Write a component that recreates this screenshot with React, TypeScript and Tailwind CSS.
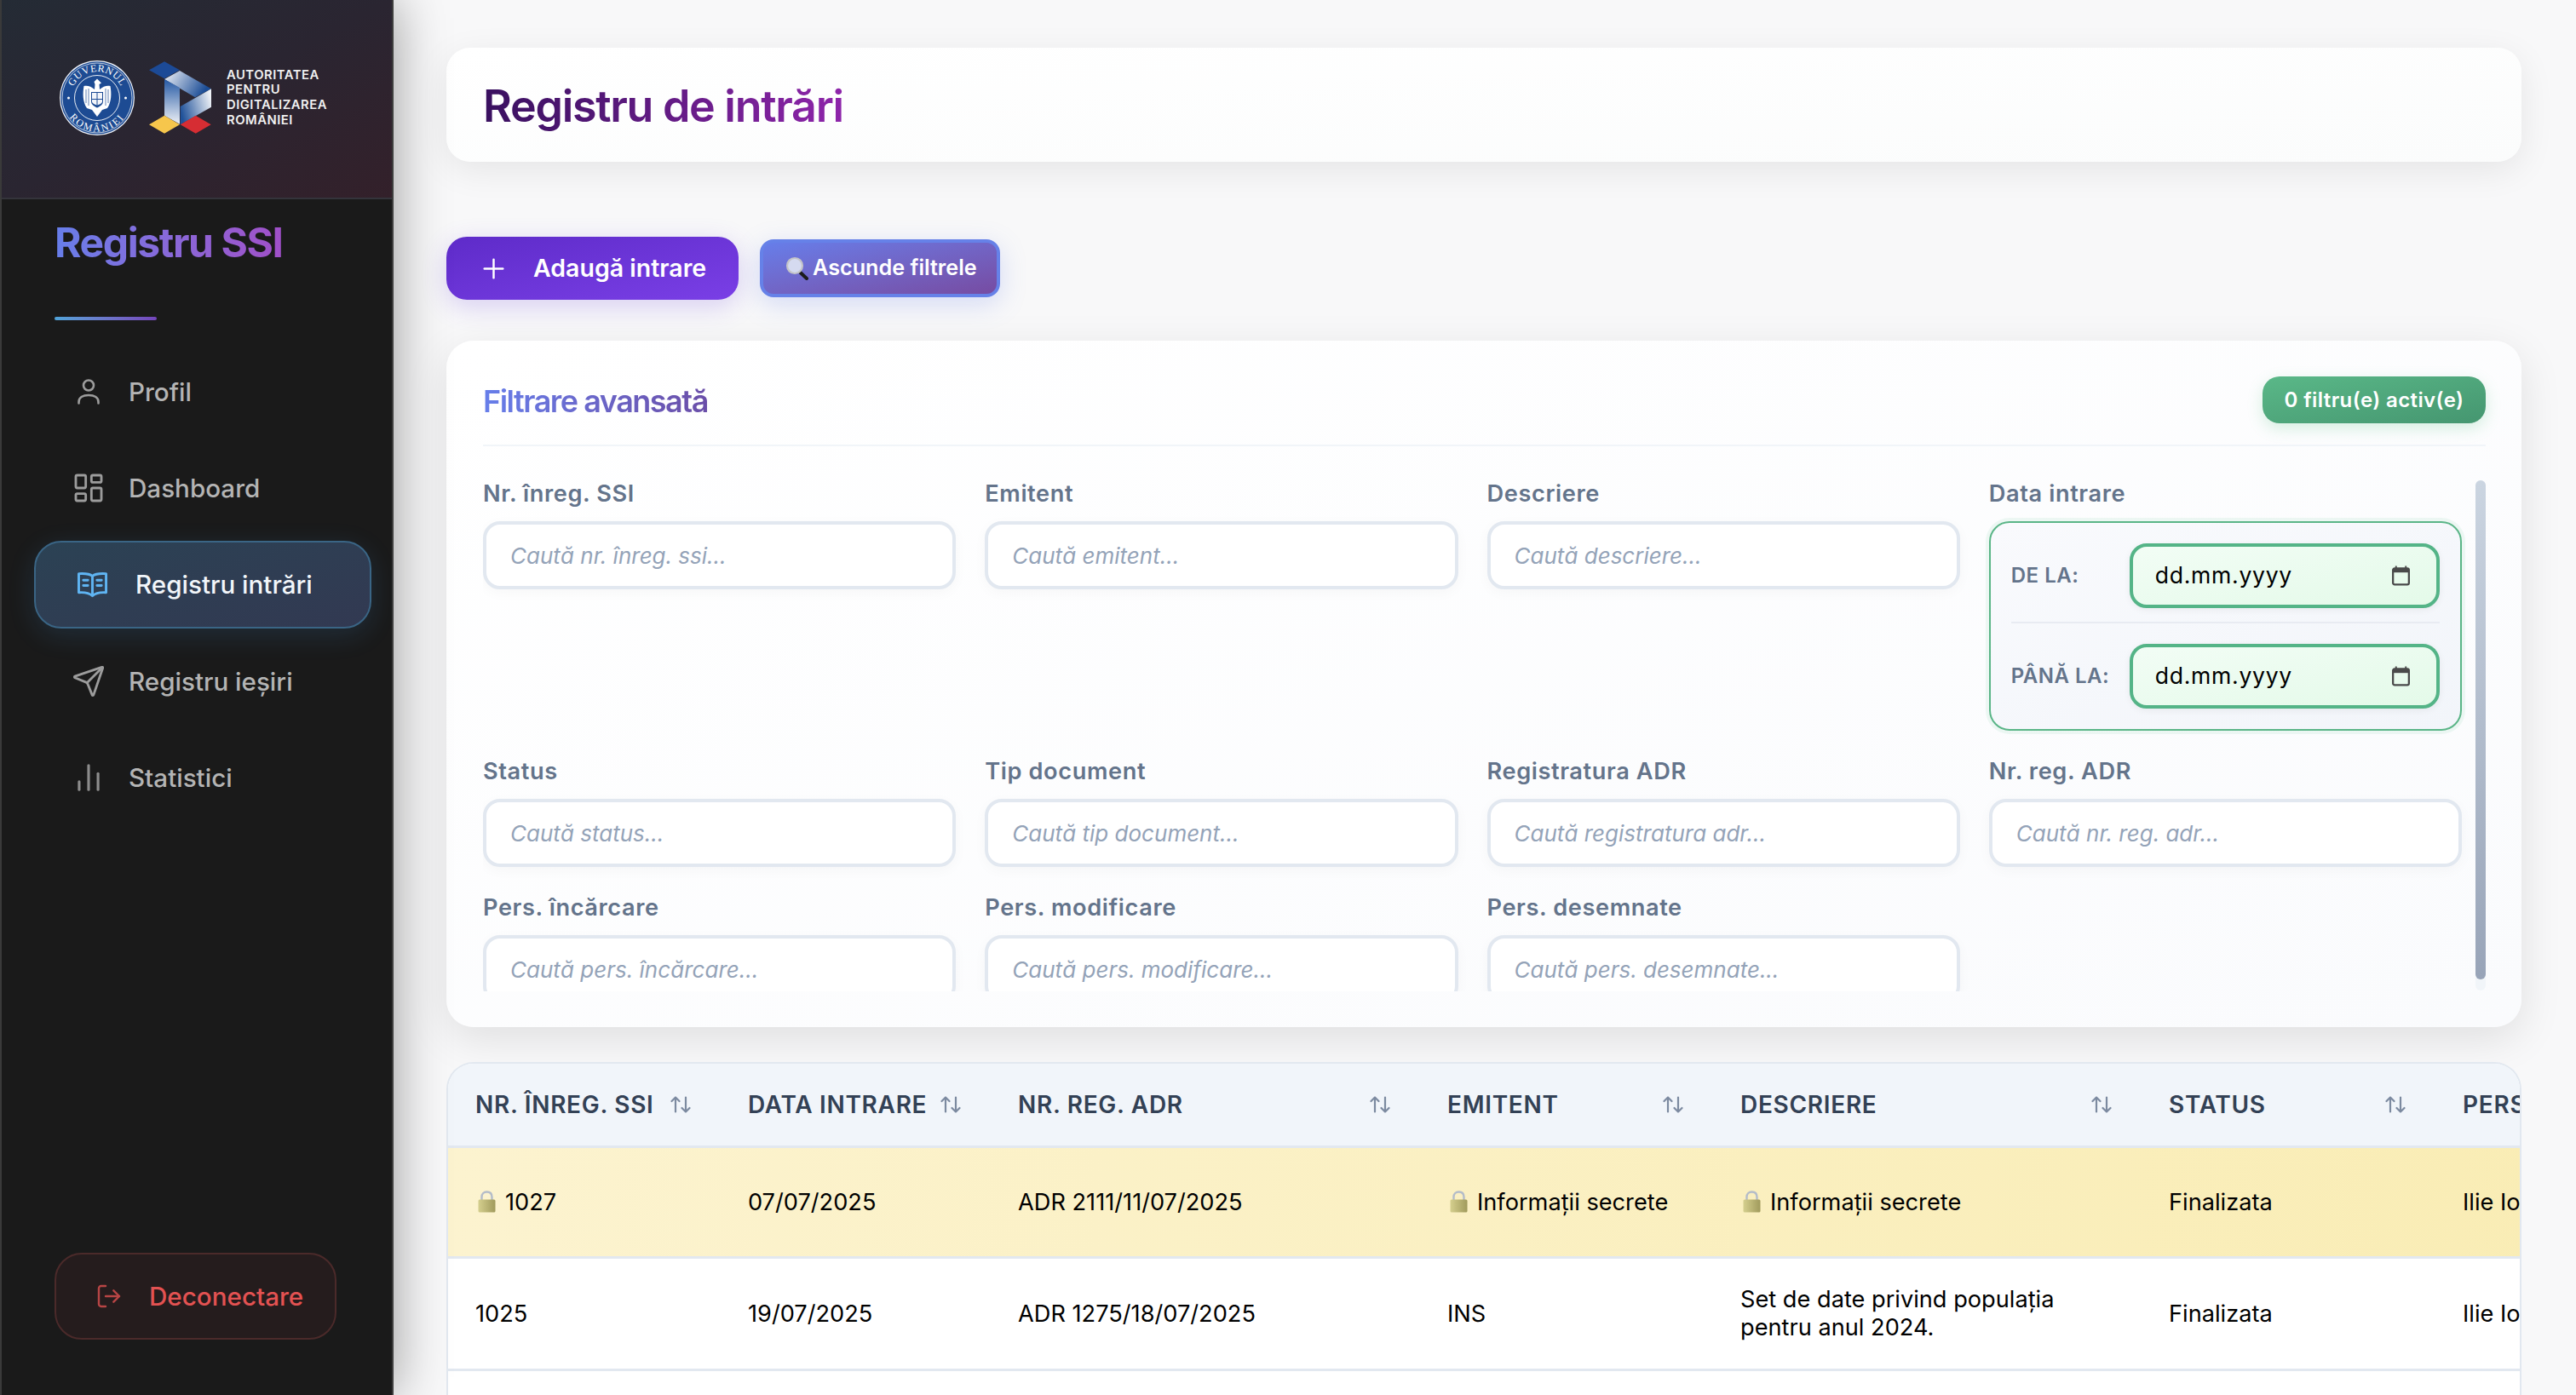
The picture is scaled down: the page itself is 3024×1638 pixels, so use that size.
import React from "react";
import { LayoutDashboard, Send, ChartNoAxesColumn, LogOut, Plus } from "lucide-react";

function Seal() {
  return (
    <svg width="88" height="88" viewBox="0 0 88 88" className="shrink-0">
      <defs>
        <path id="sealTop" d="M 13 44 A 31 31 0 0 1 75 44" />
        <path id="sealBottom" d="M 4.500 44 A 39.500 39.500 0 0 0 83.500 44" />
      </defs>
      <circle cx="44" cy="44" r="44" fill="#f2f5fa" />
      <circle cx="44" cy="44" r="42.800" fill="#1d4b93" />
      <circle cx="44" cy="44" r="41" fill="none" stroke="#ffffff" strokeWidth="0.700" />
      <circle cx="44" cy="44" r="26.500" fill="none" stroke="#ffffff" strokeWidth="0.900" />
      <text fill="#fff" fontSize="12" fontFamily="'Liberation Serif',serif" letterSpacing="0.500">
        <textPath href="#sealTop" startOffset="50%" textAnchor="middle">GUVERNUL</textPath>
      </text>
      <text fill="#fff" fontSize="12" fontFamily="'Liberation Serif',serif" letterSpacing="2">
        <textPath href="#sealBottom" startOffset="50%" textAnchor="middle">ROMÂNIEI</textPath>
      </text>
      <circle cx="10.500" cy="44" r="1.500" fill="#fff" />
      <circle cx="77.500" cy="44" r="1.500" fill="#fff" />
      <path fill="#fff" d="M41 34 C37 30 32 29 28.500 30 C27 38 27 49 32 56 L38 58 L44 66 L50 58 L56 56 C61 49 61 38 59.500 30 C56 29 51 30 47 34 L46.500 28 L49 26.500 L44 21.500 L40.500 25 L41.500 28 Z" />
      <path fill="#1d4b93" d="M37 37 h14 v11 c0 4 -4 6 -7 7.500 c-3 -1.500 -7 -3.500 -7 -7.500 Z" />
      <path fill="#f4f6fa" d="M38 38 h5.500 v7 h-5.500 Z M44.500 38 h5.500 v7 h-5.500 Z M38 46 h5.500 v6.500 l-3.500 -1.500 l-2 -2 Z M44.500 46 h5.500 v3 l-2 2 l-3.500 1.500 Z" />
      <path stroke="#1d4b93" strokeWidth="0.700" fill="none" d="M31 34 v16 M34 33 v20 M54 33 v20 M57 34 v16" />
    </svg>
  );
}

function AdrMark() {
  return (
    <svg width="74" height="86" viewBox="176 73 74 86" className="shrink-0">
      <defs>
        <linearGradient id="adrTop" x1="0" y1="0" x2="1" y2="0.350">
          <stop offset="0" stopColor="#f4f6fa" />
          <stop offset="1" stopColor="#1c4d96" />
        </linearGradient>
        <linearGradient id="adrVert" x1="0" y1="0" x2="0" y2="1">
          <stop offset="0" stopColor="#2458a4" />
          <stop offset="1" stopColor="#eef1f6" />
        </linearGradient>
        <linearGradient id="adrRight" x1="0" y1="0.600" x2="1" y2="0.300">
          <stop offset="0" stopColor="#1f5199" />
          <stop offset="1" stopColor="#eef1f6" />
        </linearGradient>
      </defs>
      <polygon fill="#1c4a96" points="176,83.300 194,73.300 212,83.300 194,93.300" />
      <polygon fill="url(#adrTop)" points="194,94 212,84 249,105.300 230,115.300" />
      <polygon fill="url(#adrVert)" points="194,94 212,104 212,146.700 194,136.700" />
      <polygon fill="url(#adrRight)" points="212.700,126 249,105.300 249,126.700 212.700,147.300" />
      <polygon fill="#f6c64c" points="176,147.300 194,136.700 212,147.300 194,157.700" />
      <polygon fill="#d62d33" points="212.700,147.300 230.700,136.700 248.700,147.300 230.700,157.700" />
    </svg>
  );
}

function Lock() {
  return (
    <svg width="21" height="26" viewBox="0 0 21 26" className="ml-[3px] shrink-0">
      <defs>
        <linearGradient id="lockBody" x1="0" y1="0" x2="1" y2="0">
          <stop offset="0" stopColor="#d5cf8e" />
          <stop offset="1" stopColor="#a09a5c" />
        </linearGradient>
      </defs>
      <path d="M4.500 12 V7.500 C4.500 3.500 7 1.500 10.500 1.500 C14 1.500 16.500 3.500 16.500 7.500 V12" fill="none" stroke="#b4bcc9" strokeWidth="2.400" />
      <rect x="0.500" y="10.500" width="20" height="15" rx="1.500" fill="url(#lockBody)" />
    </svg>
  );
}

function Magnifier() {
  return (
    <svg width="28" height="28" viewBox="0 0 28 28" className="shrink-0">
      <path d="M16.500 18 L25 26" stroke="#1c1c1c" strokeWidth="4" strokeLinecap="round" />
      <circle cx="11" cy="11" r="9" fill="#d5daf0" stroke="#c4c4c8" strokeWidth="2.200" />
    </svg>
  );
}

function Calendar() {
  return (
    <svg width="21" height="24" viewBox="0 0 22 24" className="shrink-0">
      <path d="M5 0 v3 M17 0 v3" stroke="#4a4a4a" strokeWidth="2" />
      <rect x="1.200" y="3" width="19.600" height="19.800" rx="2" fill="none" stroke="#4a4a4a" strokeWidth="2.400" />
      <rect x="1.200" y="3" width="19.600" height="5" fill="#4a4a4a" />
    </svg>
  );
}

function SortIcon() {
  return (
    <svg width="24" height="20" viewBox="0 0 24 20" fill="none" stroke="#7c8aa0" strokeWidth="2.200" strokeLinecap="round" strokeLinejoin="round" className="mr-[3px] shrink-0">
      <path d="M6 18.500 V1.500 M1.500 6 L6 1.500 L10.500 6" />
      <path d="M18 1.500 V18.500 M13.500 14 L18 18.500 L22.500 14" />
    </svg>
  );
}

function UserIcon() {
  return (
    <svg width="26" height="30" viewBox="0 0 26 30" fill="none" stroke="#9c9c9c" strokeWidth="2.600" strokeLinecap="round">
      <circle cx="13" cy="7.500" r="6" />
      <path d="M1.500 28.500 v-1.500 C1.500 22 6 19 13 19 C20 19 24.500 22 24.500 27 V28.500" />
    </svg>
  );
}

function BookIcon() {
  return (
    <svg width="35" height="32" viewBox="0 0 36 32" fill="none" stroke="#5fb4f2" strokeWidth="3" strokeLinecap="round" strokeLinejoin="round" className="shrink-0">
      <path d="M18 5 C15 2.500 8 1.800 1.500 2.200 V25 C8 24.500 14 25.500 18 29 C22 25.500 28 24.500 34.500 25 V2.200 C28 1.800 21 2.500 18 5 Z M18 5 V29" />
      <path d="M7 10 H12.500 M7 16.500 H12.500 M23.500 10 H29 M23.500 16.500 H29" />
    </svg>
  );
}

const filters = [
  ["Nr. înreg. SSI", "Caută nr. înreg. ssi..."],
  ["Emitent", "Caută emitent..."],
  ["Descriere", "Caută descriere..."],
  ["Data intrare", ""],
  ["Status", "Caută status..."],
  ["Tip document", "Caută tip document..."],
  ["Registratura ADR", "Caută registratura adr..."],
  ["Nr. reg. ADR", "Caută nr. reg. adr..."],
  ["Pers. încărcare", "Caută pers. încărcare..."],
  ["Pers. modificare", "Caută pers. modificare..."],
  ["Pers. desemnate", "Caută pers. desemnate..."],
];

function DateRow({ label }: { label: string }) {
  return (
    <div className="flex items-center">
      <span className="w-[139px] shrink-0 text-[24px] font-semibold tracking-[0.5px] text-[#64748b]">{label}</span>
      <div className="flex h-[76px] flex-1 items-center justify-between rounded-[20px] border-4 border-[#54b487] bg-gradient-to-br from-[#f2fdf5] to-[#e4fae9] pl-[26px] pr-[31px] text-[26.600px] tracking-[0.7px] text-black shadow-[0_2px_8px_rgba(0,0,0,0.06)]">
        <span>dd.mm.yyyy</span>
        <Calendar />
      </div>
    </div>
  );
}

function NavItem({ icon, label }: { icon: React.ReactNode; label: string }) {
  return (
    <div className="ml-[38px] flex h-[102px] items-center text-[29.600px] font-medium text-[#b4b4b4]">
      <div className="flex w-[111px] shrink-0 items-center justify-center pl-[16px]">{icon}</div>
      <span>{label}</span>
    </div>
  );
}

const cols = [
  ["NR. ÎNREG. SSI", 320],
  ["DATA INTRARE", 317],
  ["NR. REG. ADR", 504],
  ["EMITENT", 344],
  ["DESCRIERE", 503],
  ["STATUS", 345],
  ["PERS. ÎNCĂRCARE", 400],
] as const;

function Secret({ text }: { text: string }) {
  return (
    <span className="flex items-center gap-[11px]">
      <Lock />
      <span>{text}</span>
    </span>
  );
}

const cell = "px-[32px] align-middle text-[27.200px] leading-[33px] text-black whitespace-nowrap";

export default function App() {
  return (
    <div className="flex h-[1638px] w-[3024px] overflow-hidden bg-[#f8f8f9] font-[Inter,sans-serif]">
      <aside className="relative z-10 flex h-full w-[460px] shrink-0 flex-col border-l-2 border-[#3a3a3a] bg-[#1a1a1a] shadow-[2px_0_0_#3c3c3c,0_0_60px_rgba(0,0,0,0.42)]">
        <div className="flex h-[234px] shrink-0 items-center gap-[17px] border-b-2 border-[#34343b] bg-gradient-to-br from-[#242b35] via-[#2a2531] to-[#33202a] pb-[2px] pl-[68px]">
          <Seal />
          <div className="flex items-center gap-[17px]">
            <AdrMark />
            <div className="text-[14.800px] font-semibold leading-[17.700px] tracking-[0.5px] text-[#f1f1f1]">
              <div>AUTORITATEA</div>
              <div>PENTRU</div>
              <div>DIGITALIZAREA</div>
              <div>ROMÂNIEI</div>
            </div>
          </div>
        </div>
        <div className="pl-[62px] pt-[19px]">
          <div className="w-fit bg-gradient-to-r from-[#667eea] to-[#a04fc8] bg-clip-text text-[48px] font-bold leading-[64px] tracking-[-1.400px] text-transparent">
            Registru SSI
          </div>
          <div className="mt-[55px] h-[4px] w-[120px] rounded-full bg-gradient-to-r from-[#4fa3d8] to-[#7445bb]" />
        </div>
        <nav className="mt-[33px] flex flex-col gap-[11px] pr-[24px]">
          <NavItem icon={<UserIcon />} label="Profil" />
          <NavItem icon={<LayoutDashboard size={40} color="#9c9c9c" strokeWidth={1.700} />} label="Dashboard" />
          <div className="ml-[38px] flex h-[103px] items-center rounded-[32px] border-2 border-[#3a6585] bg-gradient-to-br from-[#2b4254] to-[#323952] text-[29.600px] font-medium text-[#f2f6fa] shadow-[0_8px_32px_rgba(79,172,254,0.14)]">
            <div className="flex w-[117px] shrink-0 items-center pl-[49px]"><BookIcon /></div>
            <span>Registru intrări</span>
          </div>
          <NavItem icon={<Send size={40} color="#9c9c9c" strokeWidth={1.700} />} label="Registru ieșiri" />
          <NavItem icon={<ChartNoAxesColumn size={38} color="#8c8c8c" strokeWidth={2} />} label="Statistici" />
        </nav>
        <div className="mt-auto mb-[65px] ml-[62px] flex h-[102px] w-[331px] items-center rounded-[32px] border-2 border-[#4b2a2a] bg-[#251c1d] pl-[46px] text-[29.600px] font-medium text-[#e35252]">
          <LogOut size={32} color="#b84545" strokeWidth={1.800} className="shrink-0" />
          <span className="ml-[31px]">Deconectare</span>
        </div>
      </aside>

      <main className="flex h-full min-w-0 flex-1 flex-col pl-[64px] pr-[64px] pt-[56px]">
        <header className="flex h-[134px] shrink-0 items-center rounded-[28px] bg-gradient-to-br from-white to-[#fbfcfc] pl-[43px] shadow-[0_10px_40px_rgba(0,0,0,0.08)]">
          <h1 className="mt-[3px] bg-gradient-to-r from-[#39105f] to-[#8e25aa] bg-clip-text text-[52px] font-semibold leading-[72px] tracking-[-1.300px] text-transparent">
            Registru de intrări
          </h1>
        </header>

        <div className="mt-[88px] flex shrink-0 items-center gap-[25px]">
          <button className="flex h-[74px] w-[343px] items-center rounded-[24px] bg-gradient-to-br from-[#5e2bc9] to-[#7a3fe6] pl-[37px] text-[28.500px] font-semibold text-white shadow-[0_8px_30px_rgba(102,60,220,0.22)]">
            <Plus size={37} strokeWidth={1.600} className="shrink-0" />
            <span className="ml-[28px]">Adaugă intrare</span>
          </button>
          <button className="flex h-[68px] w-[282px] items-center gap-[4px] rounded-[16px] border-4 border-[#6681e8] bg-gradient-to-br from-[#667eea] to-[#764ba2] pl-[26px] text-[25.200px] font-semibold text-white shadow-[0_8px_30px_rgba(102,126,234,0.25)]">
            <Magnifier />
            <span>Ascunde filtrele</span>
          </button>
        </div>

        <section className="mt-[48px] flex h-[806px] shrink-0 flex-col rounded-[32px] bg-gradient-to-br from-white to-[#fafbfd] pl-[43px] pr-[42px] pt-[42px] shadow-[0_14px_50px_rgba(0,0,0,0.1)]">
          <div className="flex h-[82px] shrink-0 items-start justify-between border-b-2 border-[#f1f5f9]">
            <h2 className="mt-[7px] bg-gradient-to-r from-[#667eea] to-[#6a4ea8] bg-clip-text text-[36px] font-semibold leading-[44px] tracking-[-1.500px] text-transparent">
              Filtrare avansată
            </h2>
            <div className="flex h-[55px] w-[262px] items-center justify-center rounded-[20px] bg-gradient-to-br from-[#5ab888] to-[#459670] text-[24px] font-semibold tracking-[0.4px] text-white shadow-[0_6px_18px_rgba(72,187,120,0.22)]">
              0 filtru(e) activ(e)
            </div>
          </div>
          <div className="mt-[40px] flex h-[600px] shrink-0 overflow-hidden">
            <div className="grid flex-1 grid-cols-4 content-start gap-x-[34px] gap-y-[32px] self-start">
              {filters.map(([label, placeholder]) => (
                <div key={label} className="flex flex-col">
                  <label className="mb-[16px] text-[27.200px] font-semibold leading-[32px] tracking-[0.600px] text-[#64748b]">{label}</label>
                  {placeholder ? (
                    <input
                      readOnly
                      placeholder={placeholder}
                      className="h-[80px] w-full rounded-[20px] border-4 border-[#e2e8f0] bg-white px-[28px] text-[26px] shadow-[0_4px_16px_rgba(0,0,0,0.03)] outline-none placeholder:italic placeholder:text-[#94a3b8]"
                    />
                  ) : (
                    <div className="flex h-[246px] flex-col rounded-[24px] border-2 border-[#5ab587] bg-gradient-to-br from-[#f9fafd] to-[#f2f5fa] p-[24px] shadow-[0_0_0_4px_rgba(82,183,136,0.09)]">
                      <div className="mb-[24px] border-b-2 border-[#e8ebf2] pb-[16px]"><DateRow label="DE LA:" /></div>
                      <DateRow label="PÂNĂ LA:" />
                    </div>
                  )}
                </div>
              ))}
            </div>
            <div className="ml-[16px] h-[599px] w-[12px] shrink-0 rounded-full bg-[#f1f5f9]">
              <div className="h-[586px] w-full rounded-full bg-gradient-to-b from-[#cbd5e1] to-[#98a4b8]" />
            </div>
          </div>
        </section>

        <div className="mt-[41px] shrink-0 overflow-hidden rounded-t-[32px] border-2 border-b-0 border-[#e2e8f0] bg-white">
          <table className="w-[2733px] table-fixed border-collapse">
            <colgroup>
              {cols.map(([name, width]) => (
                <col key={name} width={width} />
              ))}
            </colgroup>
            <thead>
              <tr className="h-[97px] border-b-[3px] border-[#e2e8f0] bg-[#f1f5fa]">
                {cols.map(([name], i) => (
                  <th key={name} className="px-[32px] text-left align-middle">
                    <div className="flex items-center justify-between whitespace-nowrap text-[28px] font-semibold tracking-[0.7px] text-[#334155]">
                      <span>{name}</span>
                      {i < 6 && <SortIcon />}
                    </div>
                  </th>
                ))}
              </tr>
            </thead>
            <tbody>
              <tr className="h-[130px] border-b-[3px] border-[#e2e8f0] bg-gradient-to-r from-[#fcf3cf] to-[#f9ecb2]">
                <td className={cell}><Secret text="1027" /></td>
                <td className={cell}>07/07/2025</td>
                <td className={cell}>ADR 2111/11/07/2025</td>
                <td className={cell}><Secret text="Informații secrete" /></td>
                <td className={cell}><Secret text="Informații secrete" /></td>
                <td className={cell}>Finalizata</td>
                <td className={cell}>Ilie Ionescu</td>
              </tr>
              <tr className="h-[132px] border-b-[3px] border-[#e2e8f0] bg-white">
                <td className={cell}>1025</td>
                <td className={cell}>19/07/2025</td>
                <td className={cell}>ADR 1275/18/07/2025</td>
                <td className={cell}>INS</td>
                <td className={cell}>Set de date privind populația<br />pentru anul 2024.</td>
                <td className={cell}>Finalizata</td>
                <td className={cell}>Ilie Ionescu</td>
              </tr>
              <tr className="h-[132px] bg-white"><td colSpan={7} /></tr>
            </tbody>
          </table>
        </div>
      </main>
    </div>
  );
}
